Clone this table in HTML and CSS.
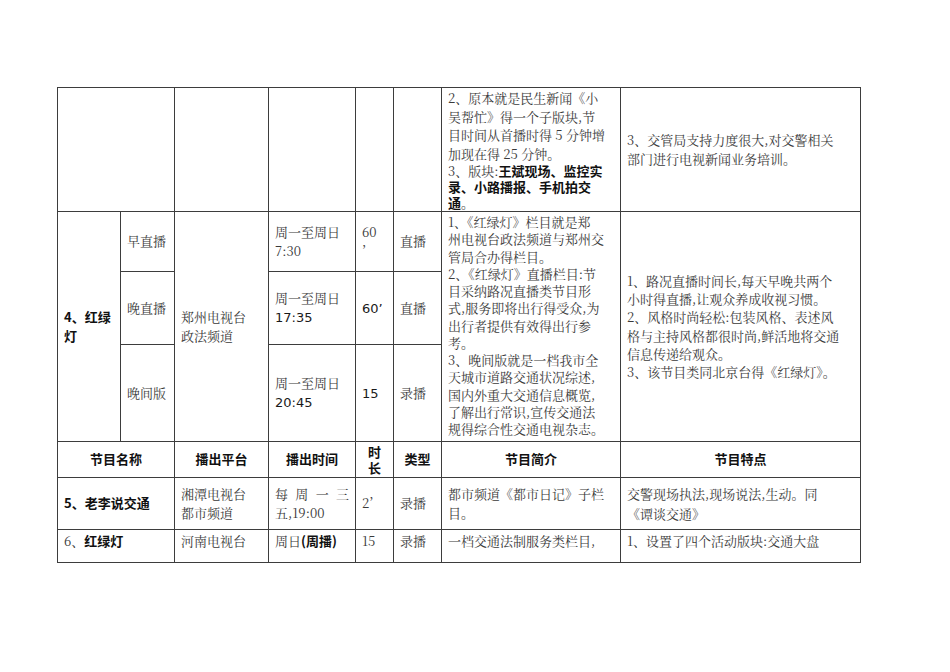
FILE: index.html
```html
<!DOCTYPE html>
<html lang="zh-CN">
<head>
<meta charset="utf-8">
<title>交通节目对比</title>
<link rel="stylesheet" href="styles.css">
</head>
<body>
<div class="page">
<table class="grid">
  <colgroup>
    <col class="c-name-a"><col class="c-name-b"><col class="c-plat"><col class="c-time"><col class="c-dur"><col class="c-type"><col class="c-intro"><col class="c-feat">
  </colgroup>
  <tbody>
    <tr class="r0">
      <td colspan="2"></td>
      <td></td>
      <td></td>
      <td></td>
      <td></td>
      <td class="intro top">
        <div class="lines">2、原本就是民生新闻《小<br>吴帮忙》得一个子版块,节<br>目时间从首播时得 5 分钟增<br>加现在得 25 分钟。</div>
        <div class="lines tight">3、版块:<b>王斌现场、监控实<br>录、小路播报、手机拍交<br>通</b>。</div>
      </td>
      <td class="feat">3、交管局支持力度很大,对交警相关<br>部门进行电视新闻业务培训。</td>
    </tr>
    <tr class="r4a">
      <td rowspan="3" class="name4"><b>4、红绿<br>灯</b></td>
      <td class="sub">早直播</td>
      <td rowspan="3" class="plat4">郑州电视台<br>政法频道</td>
      <td class="time">周一至周日<br>7:30</td>
      <td class="dur">60<br>’</td>
      <td class="type">直播</td>
      <td rowspan="3" class="intro top4">1、《红绿灯》栏目就是郑<br>州电视台政法频道与郑州交<br>管局合办得栏目。<br>2、《红绿灯》直播栏目:节<br>目采纳路况直播类节目形<br>式,服务即将出行得受众,为<br>出行者提供有效得出行参<br>考。<br>3、晚间版就是一档我市全<br>天城市道路交通状况综述,<br>国内外重大交通信息概览,<br>了解出行常识,宣传交通法<br>规得综合性交通电视杂志。</td>
      <td rowspan="3" class="feat feat4">1、路况直播时间长,每天早晚共两个<br>小时得直播,让观众养成收视习惯。<br>2、风格时尚轻松:包装风格、表述风<br>格与主持风格都很时尚,鲜活地将交通<br>信息传递给观众。<br>3、该节目类同北京台得《红绿灯》。</td>
    </tr>
    <tr class="r4b">
      <td class="sub">晚直播</td>
      <td class="time">周一至周日<br><span class="num">17:35</span></td>
      <td class="dur"><span class="num">60’</span></td>
      <td class="type">直播</td>
    </tr>
    <tr class="r4c">
      <td class="sub">晚间版</td>
      <td class="time">周一至周日<br><span class="num">20:45</span></td>
      <td class="dur"><span class="num">15</span></td>
      <td class="type">录播</td>
    </tr>
    <tr class="head">
      <th colspan="2">节目名称</th>
      <th>播出平台</th>
      <th>播出时间</th>
      <th class="two">时<br>长</th>
      <th>类型</th>
      <th>节目简介</th>
      <th>节目特点</th>
    </tr>
    <tr class="r5">
      <td colspan="2" class="name"><b>5、老李说交通</b></td>
      <td class="plat">湘潭电视台<br>都市频道</td>
      <td class="time"><span class="spread"><span>每</span><span>周</span><span>一</span><span>三</span></span>五,19:00</td>
      <td class="dur">2’</td>
      <td class="type">录播</td>
      <td class="intro">都市频道《都市日记》子栏<br>目。</td>
      <td class="feat feat5">交警现场执法,现场说法,生动。同<br>《谭谈交通》</td>
    </tr>
    <tr class="r6">
      <td colspan="2" class="name">6、<b>红绿灯</b></td>
      <td class="plat">河南电视台</td>
      <td class="time">周日<b>(周播)</b></td>
      <td class="dur">15</td>
      <td class="type">录播</td>
      <td class="intro">一档交通法制服务类栏目,</td>
      <td class="feat">1、设置了四个活动版块:交通大盘</td>
    </tr>
  </tbody>
</table>
</div>
</body>
</html>
```

FILE: styles.css
```css
html, body {
  margin: 0;
  padding: 0;
  background: #ffffff;
}

.page {
  padding: 87px 0 0 57px;
}

.grid {
  border-collapse: collapse;
  table-layout: fixed;
  width: 803px;
  font-family: "Noto Serif CJK SC", "Noto Sans CJK SC", "Liberation Serif", serif;
  font-size: 13px;
  line-height: 18.7px;
  color: #3a3a3a;
}

.c-name-a { width: 63px; }
.c-name-b { width: 54px; }
.c-plat { width: 94px; }
.c-time { width: 87px; }
.c-dur { width: 38px; }
.c-type { width: 48px; }
.c-intro { width: 179px; }
.c-feat { width: 240px; }

.grid td,
.grid th {
  border: 1px solid #3d3d3d;
  padding: 0 2px 0 6px;
  vertical-align: middle;
  text-align: left;
  white-space: nowrap;
  overflow: hidden;
}

.grid b,
.grid th {
  font-family: "Noto Sans CJK SC", sans-serif;
  font-weight: 700;
  color: #111;
}

.grid th {
  text-align: center;
  padding: 0;
}

.grid th.two {
  line-height: 16px;
}

.r0 { height: 124px; }
.r4a { height: 60px; }
.r4b { height: 73px; }
.r4c { height: 97px; }
.head { height: 36px; }
.r5 { height: 52px; }
.r6 { height: 33px; }

.r6 td {
  vertical-align: top;
  padding-top: 2px;
}

.intro { padding-left: 5px; }
.intro.top {
  vertical-align: top;
  padding-top: 1px;
}
.intro.top .lines {
  line-height: 18.5px;
}
.intro.top .lines.tight {
  line-height: 15.8px;
}
.intro.top4 {
  vertical-align: top;
  padding-top: 1px;
  line-height: 17.25px;
}

.feat { padding-left: 6px; }
.feat4 { line-height: 18.2px; }
.feat5 { line-height: 20px; padding-top: 3px; }

.name { padding-left: 2px; }
.name4 { padding-left: 5px; }
.sub { padding-left: 7px; }
.plat { padding-left: 4px; }
.plat4 { padding-left: 15px; }
.time { padding-left: 6px; }
.dur { padding-left: 5px; }
.type { padding-left: 6px; }

.num {
  font-family: "DejaVu Sans", sans-serif;
  font-size: 13px;
  line-height: 1;
  color: #1a1a1a;
}

.spread {
  display: flex;
  justify-content: space-between;
  width: 74px;
}
```
